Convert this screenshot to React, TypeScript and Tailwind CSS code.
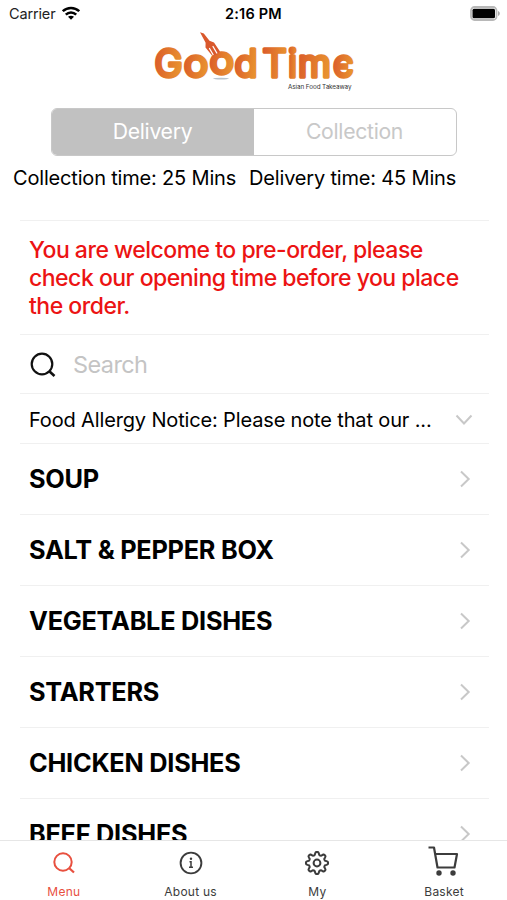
import type { ReactNode } from "react"

const categories = [
  "SOUP",
  "SALT & PEPPER BOX",
  "VEGETABLE DISHES",
  "STARTERS",
  "CHICKEN DISHES",
  "BEEF DISHES",
]

function StatusBar() {
  return (
    <div className="flex h-7 shrink-0 items-center justify-between pl-[9px] pr-[7px] text-[14.5px] text-[#222]">
      <div className="flex w-[120px] items-center gap-[7px]">
        <span className="text-[14.5px] tracking-[-0.15px]">Carrier</span>
        <svg className="mb-[3px]" width="18" height="14" viewBox="0 0 18 14" fill="none" stroke="#000" strokeWidth="2.5">
          <path d="M.8 5.2C5.3.8 12.7.8 17.2 5.2" />
          <path d="M3.8 8.7c3-2.9 7.4-2.9 10.4 0" />
          <path d="M9 13.8 6 10.8c1.7-1.5 4.3-1.5 6 0z" fill="#000" stroke="none" />
        </svg>
      </div>
      <span className="mr-[2px] font-semibold text-black tracking-[0.2px]">2:16 PM</span>
      <div className="mb-[2px] flex w-[120px] justify-end">
        <svg width="30" height="15" viewBox="0 0 30 15">
          <rect x="1" y="1" width="25.5" height="13" rx="3.5" fill="#fff" stroke="#b8b8b8" strokeWidth="1.8" />
          <rect x="2.5" y="2.7" width="22.5" height="9.6" rx="1.5" fill="#000" />
          <path d="M28 5v5c2.4-1 2.4-4 0-5z" fill="#aaa" />
        </svg>
      </div>
    </div>
  )
}

function Logo() {
  return (
    <svg className="mx-auto block" width="204" height="66" viewBox="152 28 204 66" role="img" aria-label="Good Time">
      <defs>
        <linearGradient id="flame" x1="0" x2="1" y1="0" y2="0.2">
          <stop offset="0" stopColor="#da582a" />
          <stop offset="1" stopColor="#e8922f" />
        </linearGradient>
      </defs>
      <ellipse cx="221" cy="78.6" rx="8" ry="0.9" fill="#b9c3cc" />
      <g fill="url(#flame)" stroke="url(#flame)" strokeWidth="3.4" strokeLinejoin="round" fontFamily="Inter, sans-serif" fontSize="37.5">
        <text x="154.5" y="77.2">G</text>
        <text x="183.8" y="77.2" textLength="24.5" lengthAdjust="spacingAndGlyphs">o</text>
        <text x="209.5" y="74.3" textLength="24.5" lengthAdjust="spacingAndGlyphs">o</text>
        <text x="234.5" y="77.2">d</text>
        <text x="262.5" y="77.2">T</text>
        <text x="288" y="77.2">i</text>
        <text x="298" y="77.2">m</text>
        <text x="333" y="77.2" textLength="20.5" lengthAdjust="spacingAndGlyphs">є</text>
      </g>
      {/* fork leaning on the second o */}
      <path d="M200 32.3 203.8 33.5 209.5 40.8 214 42.5 220 51.5 217 54.5 212 55.5 205.5 47.5 205.6 42.8z" fill="#d9582c" />
      <path d="M209.5 48.5 213 54.5M213 46.5 216.8 53" stroke="#fff" strokeWidth="1.3" strokeLinecap="round" />
      <text x="288" y="89" fontSize="6.3" fill="#333" fontFamily="Inter, sans-serif" textLength="63.5">Asian Food Takeaway</text>
    </svg>
  )
}

function Chevron({ down = false }: { down?: boolean }) {
  return (
    <svg className="shrink-0" width="18" height="18" viewBox="0 0 18 18" fill="none" stroke="#c8c8c8" strokeWidth="2">
      <path d={down ? "M1.5 4.5 9 12.5 16.5 4.5" : "M5 1.5 12.7 9 5 16.5"} />
    </svg>
  )
}

function Tab({ label, active = false, children }: { label: string; active?: boolean; children: ReactNode }) {
  return (
    <div className={`flex flex-1 flex-col items-center ${active ? "text-[#e8503f]" : "text-[#3c3c3c]"}`}>
      <div className="flex h-[43px] items-center">{children}</div>
      <span className="pl-px text-[12px] leading-[16px] tracking-[0.25px]">{label}</span>
    </div>
  )
}

// eight-lobed gear outline, radius alternates around the center
function gearPath() {
  const points: string[] = []
  for (let i = 0; i <= 96; i++) {
    const a = (i / 96) * Math.PI * 2
    const r = 9.6 + 1.5 * Math.tanh(2 * Math.cos(a * 8))
    points.push(`${(13 + r * Math.sin(a)).toFixed(2)} ${(13 - r * Math.cos(a)).toFixed(2)}`)
  }
  return `M${points.join("L")}Z`
}

export default function App() {
  return (
    <div className="flex h-[900px] w-[507px] flex-col overflow-hidden bg-white font-[Inter,'Liberation_Sans',sans-serif] text-black">
      <StatusBar />
      <Logo />

      <div className="mx-auto mt-[14px] flex h-[48px] w-[406px] shrink-0 overflow-hidden rounded-[6px] border-[1.5px] border-[#c8c8c8] text-[21.2px] tracking-[-0.3px]">
        <div className="flex flex-1 items-center justify-center bg-[#c1c1c1] text-white">Delivery</div>
        <div className="flex flex-1 items-center justify-center text-[#c8c8c8]">Collection</div>
      </div>

      <div className="flex h-[64px] shrink-0 gap-[13px] whitespace-nowrap pl-[13px] pt-[8px] text-[20px] leading-[28px] tracking-[-0.18px]">
        <span>Collection time: 25 Mins</span>
        <span>Delivery time: 45 Mins</span>
      </div>

      <div className="ml-5 mr-[18px] flex min-h-0 flex-1 flex-col overflow-hidden border-t border-[#f0f0f0]">
        <p className="h-[113px] shrink-0 whitespace-nowrap pl-[9px] pt-[15px] text-[23px] font-medium leading-[28px] tracking-[-0.5px] text-[#ec1313]">
          You are welcome to pre-order, please
          <br />
          check our opening time before you place
          <br />
          the order.
        </p>

        <div className="flex h-[59px] shrink-0 items-center border-t border-[#f0f0f0] pl-[10px] pt-px text-[23.5px] text-[#c4c4c4]">
          <svg width="26" height="26" viewBox="0 0 26 26" fill="none" stroke="#111" strokeWidth="2.2">
            <circle cx="12" cy="12" r="10.3" />
            <path d="m19 19 5.5 5" strokeWidth="2.6" />
          </svg>
          <span className="ml-[17px] tracking-[-0.6px]">Search</span>
        </div>

        <div className="flex h-[50px] shrink-0 items-center justify-between border-t border-[#f0f0f0] pl-[9px] pr-4 pt-[2px]">
          <span className="whitespace-nowrap text-[20px] tracking-[-0.15px]">Food Allergy Notice: Please note that our ...</span>
          <Chevron down />
        </div>

        {categories.map((name) => (
          <div key={name} className="flex h-[71px] shrink-0 items-center justify-between border-t border-[#f0f0f0] pl-[9px] pr-[15px]">
            <span className="whitespace-nowrap text-[25.3px] font-bold tracking-[-0.25px]">{name}</span>
            <Chevron />
          </div>
        ))}
      </div>

      <nav className="flex h-[60px] shrink-0 border-t border-[#e6e6e6] bg-white">
        <Tab label="Menu" active>
          <svg className="ml-px" width="22" height="22" viewBox="0 0 22 22" fill="none" stroke="currentColor" strokeWidth="2">
            <circle cx="10" cy="10" r="8.7" />
            <path d="m16 16 5 4.5" strokeWidth="2.3" />
          </svg>
        </Tab>
        <Tab label="About us">
          <svg className="ml-px" width="24" height="24" viewBox="0 0 24 24" fill="none" stroke="currentColor" strokeWidth="1.9">
            <circle cx="12" cy="12" r="10.4" />
            <path d="M10.5 10.8H12v5.2M10 16.2h4" strokeWidth="1.5" />
            <circle cx="12" cy="7.8" r="1.2" fill="currentColor" stroke="none" />
          </svg>
        </Tab>
        <Tab label="My">
          <svg width="26" height="26" viewBox="0 0 26 26" fill="none" stroke="currentColor" strokeWidth="2">
            <path d={gearPath()} strokeLinejoin="round" />
            <circle cx="13" cy="13" r="3.4" />
          </svg>
        </Tab>
        <Tab label="Basket">
          <svg className="mb-[3px] mr-px" width="32" height="32" viewBox="0 0 32 32" fill="none" stroke="currentColor" strokeWidth="2.2" strokeLinejoin="round">
            <path d="M1.5 2.5H7L10.5 22.5H27.5L30 9H8.2" />
            <circle cx="12" cy="28" r="2.7" fill="currentColor" stroke="none" />
            <circle cx="26" cy="28" r="2.7" fill="currentColor" stroke="none" />
          </svg>
        </Tab>
      </nav>
    </div>
  )
}
